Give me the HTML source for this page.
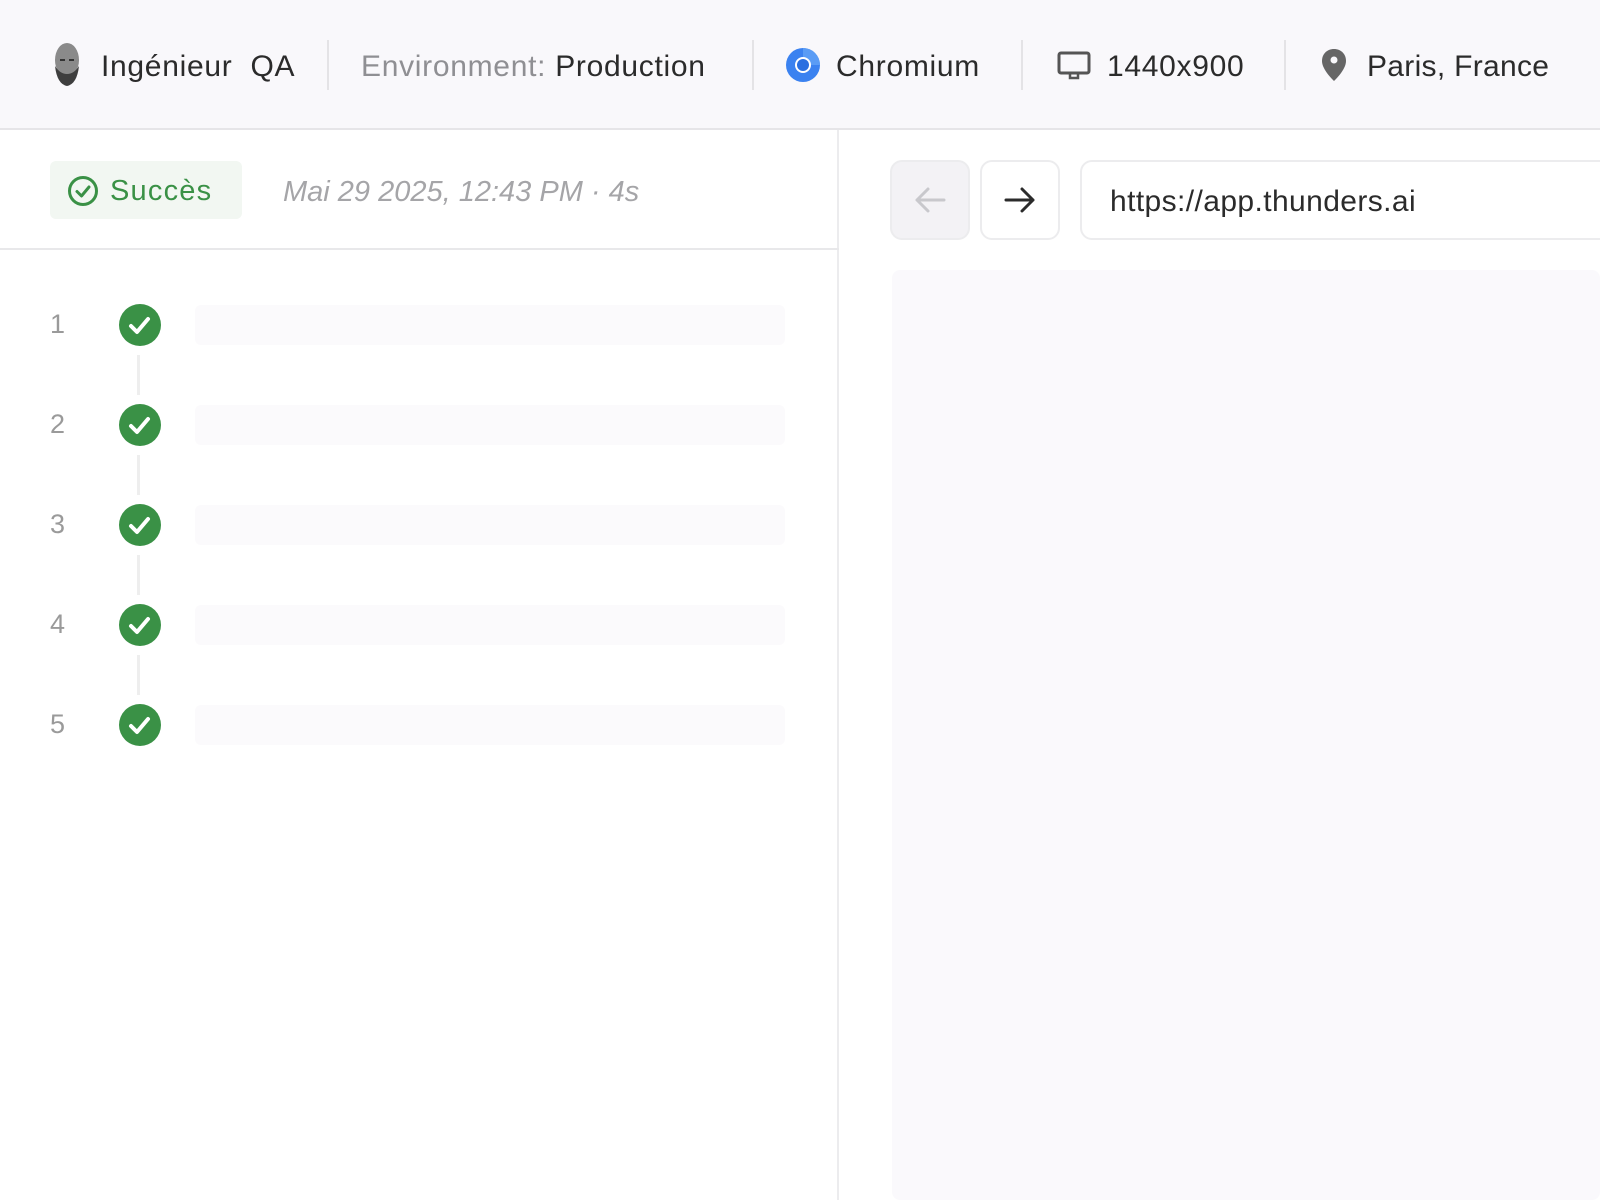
<!DOCTYPE html>
<html><head><meta charset="utf-8"><style>
*{box-sizing:border-box;margin:0;padding:0}
body{width:1600px;height:1200px;overflow:hidden;background:#fff;font-family:"Liberation Sans",sans-serif;position:relative;color:#2b2b2b}
.hdr{position:absolute;left:0;top:0;width:1600px;height:130px;background:#f9f8fb;border-bottom:2px solid #e6e5e8}
.t{position:absolute;top:48px;font-size:30px;line-height:38px;white-space:nowrap;letter-spacing:0.7px}
.sep{position:absolute;top:40px;width:2px;height:50px;background:#e4e3e6}
.left{position:absolute;left:0;top:130px;width:839px;height:1070px;border-right:2px solid #ececee}
.badge{position:absolute;left:50px;top:161px;width:192px;height:58px;background:#f2f7f2;border-radius:6px}
.num{position:absolute;left:50px;font-size:27px;color:#9a9a9a}
.dot{position:absolute;left:119px;width:42px;height:42px;border-radius:50%;background:#3a9146}
.bar{position:absolute;left:195px;width:590px;height:40px;border-radius:6px;background:#fbfafc}
.line{position:absolute;left:137px;width:3px;height:40px;background:#eeeeee}
.btn{position:absolute;top:160px;width:80px;height:80px;border:2px solid #ececee;border-radius:12px;background:#fff}
</style></head><body>
<div class="hdr">
<svg style="position:absolute;left:52px;top:42px" width="30" height="46" viewBox="0 0 30 46"><ellipse cx="15" cy="18" rx="12" ry="17" fill="#8a8a8a"/><path d="M3 24 Q5 42 15 44 Q25 42 27 24 Q22 32 15 32 Q8 32 3 24Z" fill="#3e3e3e"/><rect x="8" y="17" width="5" height="2" fill="#333"/><rect x="17" y="17" width="5" height="2" fill="#333"/></svg>
<div class="t" style="left:101px">Ingénieur&nbsp; QA</div>
<div class="sep" style="left:327px"></div>
<div class="t" style="left:361px;color:#8f8f93">Environment:&nbsp;<span style="color:#2b2b2b">Production</span></div>
<div class="sep" style="left:752px"></div>
<svg style="position:absolute;left:785px;top:47px" width="36" height="36" viewBox="0 0 36 36"><circle cx="18" cy="18" r="17" fill="#3b82f0"/><path d="M18 1 A17 17 0 0 1 35 18 L24 18 A6 6 0 0 0 18 12Z" fill="#5a9cf5"/><circle cx="18" cy="18" r="8" fill="#fff"/><circle cx="18" cy="18" r="6" fill="#2a6fe0"/></svg>
<div class="t" style="left:836px">Chromium</div>
<div class="sep" style="left:1021px"></div>
<svg style="position:absolute;left:1057px;top:51px" width="34" height="30" viewBox="0 0 34 30"><rect x="2" y="2" width="30" height="20" rx="2" fill="none" stroke="#555" stroke-width="3"/><rect x="13" y="22" width="8" height="5" fill="none" stroke="#555" stroke-width="2.5"/></svg>
<div class="t" style="left:1107px">1440x900</div>
<div class="sep" style="left:1284px"></div>
<svg style="position:absolute;left:1321px;top:48px" width="26" height="34" viewBox="0 0 26 34"><path d="M13 1 C6 1 1 6 1 13 C1 22 13 33 13 33 C13 33 25 22 25 13 C25 6 20 1 13 1Z" fill="#666"/><circle cx="13" cy="12" r="3.5" fill="#f9f8fb"/></svg>
<div class="t" style="left:1367px;letter-spacing:0.3px">Paris, France</div>
</div>
<div class="left">
<div style="position:absolute;left:0;top:118px;width:839px;height:2px;background:#e8e8ea"></div>
</div>
<div class="badge"></div>
<svg style="position:absolute;left:67px;top:175px" width="32" height="32" viewBox="0 0 32 32"><circle cx="16" cy="16" r="13.5" fill="none" stroke="#3a9146" stroke-width="3"/><path d="M10 16.5 L14.5 21 L22 12" fill="none" stroke="#3a9146" stroke-width="3" stroke-linecap="round" stroke-linejoin="round"/></svg>
<div class="t" style="left:110px;top:172px;font-size:29px;color:#3a9146;letter-spacing:1.2px">Succès</div>
<div class="t" style="left:283px;top:173px;font-size:29px;font-style:italic;color:#a5a5a8;letter-spacing:0">Mai 29 2025, 12:43 PM · 4s</div>

<div class="num" style="top:309px">1</div><div class="dot" style="top:304px"></div><div class="bar" style="top:305px"></div><div class="line" style="top:355px"></div>
<div class="num" style="top:409px">2</div><div class="dot" style="top:404px"></div><div class="bar" style="top:405px"></div><div class="line" style="top:455px"></div>
<div class="num" style="top:509px">3</div><div class="dot" style="top:504px"></div><div class="bar" style="top:505px"></div><div class="line" style="top:555px"></div>
<div class="num" style="top:609px">4</div><div class="dot" style="top:604px"></div><div class="bar" style="top:605px"></div><div class="line" style="top:655px"></div>
<div class="num" style="top:709px">5</div><div class="dot" style="top:704px"></div><div class="bar" style="top:705px"></div>
<svg style="position:absolute;left:0;top:0" width="200" height="800"><g fill="none" stroke="#fff" stroke-width="4" stroke-linecap="round" stroke-linejoin="round">
<path d="M131 326 L137 332 L148 319"/><path d="M131 426 L137 432 L148 419"/><path d="M131 526 L137 532 L148 519"/><path d="M131 626 L137 632 L148 619"/><path d="M131 726 L137 732 L148 719"/></g></svg>

<div class="btn" style="left:890px;background:#f3f2f5"></div>
<svg style="position:absolute;left:912px;top:183px" width="36" height="34" viewBox="0 0 36 34"><path d="M32 17 H5 M16 6 L5 17 L16 28" fill="none" stroke="#c8c8cc" stroke-width="3" stroke-linecap="round" stroke-linejoin="round"/></svg>
<div class="btn" style="left:980px"></div>
<svg style="position:absolute;left:1002px;top:183px" width="36" height="34" viewBox="0 0 36 34"><path d="M4 17 H31 M20 6 L31 17 L20 28" fill="none" stroke="#2b2b2b" stroke-width="3" stroke-linecap="round" stroke-linejoin="round"/></svg>
<div class="btn" style="left:1080px;width:560px"></div>
<div class="t" style="left:1110px;top:183px;font-size:30px;letter-spacing:0.4px">https://app.thunders.ai</div>
<div style="position:absolute;left:892px;top:270px;width:708px;height:930px;background:#faf9fc;border-radius:8px"></div>
</body></html>
